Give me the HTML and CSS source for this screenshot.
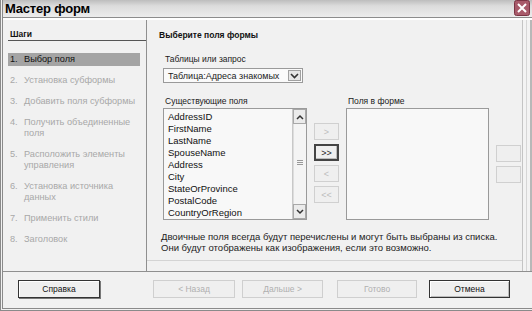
FILE: index.html
```html
<!DOCTYPE html>
<html lang="ru">
<head>
<meta charset="utf-8">
<title>Мастер форм</title>
<link rel="stylesheet" href="styles.css">
</head>
<body>
<div class="win">
  <div class="titlebar">
    <span class="title">Мастер форм</span>
    <span class="close"><svg width="16" height="16" viewBox="0 0 16 16"><rect x="0.5" y="0.5" width="15" height="15" rx="2" fill="#a85a6a" stroke="#7a3444"/><path d="M4 4 L12 12 M12 4 L4 12" stroke="#fff" stroke-width="2"/></svg></span>
  </div>
  <div class="body">
    <aside class="steps">
      <div class="steps-head">Шаги</div>
      <ol class="step-list">
        <li class="step active"><span class="num">1.</span><span>Выбор поля</span></li>
        <li class="step"><span class="num">2.</span><span>Установка субформы</span></li>
        <li class="step"><span class="num">3.</span><span>Добавить поля субформы</span></li>
        <li class="step"><span class="num">4.</span><span>Получить объединенные поля</span></li>
        <li class="step"><span class="num">5.</span><span>Расположить элементы управления</span></li>
        <li class="step"><span class="num">6.</span><span>Установка источника данных</span></li>
        <li class="step"><span class="num">7.</span><span>Применить стили</span></li>
        <li class="step"><span class="num">8.</span><span>Заголовок</span></li>
      </ol>
    </aside>
    <main class="page">
      <div class="page-head">Выберите поля формы</div>
      <div class="content">
        <div class="label">Таблицы или запрос</div>
        <div class="combo">
          <span class="combo-text">Таблица:Адреса знакомых</span>
          <span class="combo-btn"><svg width="9" height="6" viewBox="0 0 9 6"><path d="M1 1 L4.5 4.5 L8 1" fill="none" stroke="#333" stroke-width="1.6"/></svg></span>
        </div>
        <div class="lists">
          <div class="label u">Существующие поля</div>
          <div></div>
          <div class="label u">Поля в форме</div>
          <div></div>
          <div class="listbox">
            <ul class="items">
              <li>AddressID</li>
              <li>FirstName</li>
              <li>LastName</li>
              <li>SpouseName</li>
              <li>Address</li>
              <li>City</li>
              <li>StateOrProvince</li>
              <li>PostalCode</li>
              <li>CountryOrRegion</li>
            </ul>
            <div class="scroll">
              <span class="sbtn"><svg width="8" height="6" viewBox="0 0 8 6"><path d="M1 5 L4 2 L7 5" fill="none" stroke="#333" stroke-width="1.5"/></svg></span>
              <span class="track"><span class="grip"></span></span>
              <span class="sbtn"><svg width="8" height="6" viewBox="0 0 8 6"><path d="M1 1 L4 4 L7 1" fill="none" stroke="#333" stroke-width="1.5"/></svg></span>
            </div>
          </div>
          <div class="movers">
            <span class="mbtn off">&gt;</span>
            <span class="mbtn on">&gt;&gt;</span>
            <span class="mbtn off">&lt;</span>
            <span class="mbtn off">&lt;&lt;</span>
          </div>
          <div class="listbox empty"></div>
          <div class="movers side">
            <span class="mbtn off"></span>
            <span class="mbtn off"></span>
          </div>
        </div>
        <p class="note">Двоичные поля всегда будут перечислены и могут быть выбраны из списка.<br>Они будут отображены как изображения, если это возможно.</p>
      </div>
    </main>
    <div class="edge"></div>
  </div>
  <div class="footer">
    <span class="btn on shadow">Справка</span>
    <span class="btn off back">&lt; Назад</span>
    <span class="btn off next">Дальше &gt;</span>
    <span class="btn off finish">Готово</span>
    <span class="btn on cancel">Отмена</span>
  </div>
</div>
</body>
</html>
```
FILE: styles.css
```css
* { box-sizing: border-box; }
html, body { margin: 0; padding: 0; }
body {
  width: 532px;
  height: 311px;
  overflow: hidden;
  background: #efefef;
  font-family: "Liberation Sans", Arial, sans-serif;
  font-size: 8.5px;
  color: #1a1a1a;
}
.win {
  width: 532px;
  height: 311px;
  display: flex;
  flex-direction: column;
  border-left: 3px double #8a8a8a;
  border-bottom: 3px double #8a8a8a;
  background: #f1f1f1;
}
.titlebar {
  height: 18px;
  display: flex;
  align-items: center;
  justify-content: space-between;
  padding-left: 2px;
  background: linear-gradient(#bdbdbd, #dcdcdc 35%, #ececec);
  border-bottom: 1px solid #8c8c8c;
  box-shadow: 0 2px 0 #ffffff;
}
.title {
  font-size: 13px;
  font-weight: bold;
  color: #000;
  letter-spacing: -0.2px;
}
.close { display: flex; margin-right: 2px; align-self: flex-start; }
.body {
  flex: 1;
  display: flex;
  margin-top: 2px;
  border-bottom: 1px solid #8f8f8f;
}
.steps {
  width: 144px;
  border-right: 1px solid #8f8f8f;
  padding: 0 6px 0 5px;
}
.steps-head {
  font-weight: bold;
  padding: 9px 0 0 2px;
  line-height: 11px;
  height: 21px;
  border-bottom: 1px solid #555;
  margin-right: -6px;
  color: #111;
}
.step-list {
  list-style: none;
  margin: 12px 0 0;
  padding: 0;
}
.step {
  display: flex;
  font-size: 9.2px;
  line-height: 11px;
  padding: 1px 0 1px 2px;
  margin-bottom: 8px;
  color: #a8a8a8;
}
.step .num { width: 14px; flex: none; }
.step.active { background: #a4a4a4; color: #111; }
.page {
  flex: 1;
  display: flex;
  flex-direction: column;
  border-bottom: 1px solid #d4d4d4;
  margin-bottom: 10px;
}
.page-head {
  font-weight: bold;
  line-height: 11px;
  padding: 10px 0 0 12px;
  height: 22px;
  color: #111;
}
.content { padding: 12px 0 0 16px; }
.label { line-height: 11px; height: 12px; padding-left: 2px; }
.label.u { padding-left: 2px; }
.combo {
  margin-top: 2px;
  width: 140px;
  height: 15px;
  border: 1px solid #9a9a9a;
  background: #fafafa;
  display: flex;
  align-items: center;
  justify-content: space-between;
  padding-left: 4px;
  font-size: 9px;
}
.combo-btn {
  width: 13px;
  height: 11px;
  margin-right: 1px;
  border: 1px solid #a0a0a0;
  background: #e6e6e6;
  display: flex;
  align-items: center;
  justify-content: center;
}
.lists {
  margin-top: 13px;
  display: grid;
  grid-template-columns: 144px 25px 143px 25px;
  grid-template-rows: 12px 112px;
  column-gap: 7px;
}
.listbox {
  border: 1px solid #9a9a9a;
  background: #f8f8f8;
  display: flex;
}
.items {
  list-style: none;
  margin: 0;
  padding: 2px 0 0 4px;
  flex: 1;
  font-size: 9.5px;
}
.items li { line-height: 12px; height: 12px; color: #111; }
.scroll {
  width: 14px;
  display: flex;
  flex-direction: column;
  border-left: 1px solid #c8c8c8;
}
.sbtn {
  height: 15px;
  border: 1px solid #a8a8a8;
  background: #ebebeb;
  display: flex;
  align-items: center;
  justify-content: center;
}
.track { flex: 1; position: relative; background: #f4f4f4; border-left: 1px solid #ddd; }
.grip {
  position: absolute;
  left: 3px; right: 3px; top: 36px;
  height: 5px;
  border-top: 1px solid #999;
  border-bottom: 1px solid #999;
}
.grip::after { content: ""; position: absolute; left: 0; right: 0; top: 1px; border-top: 1px solid #999; }
.movers {
  display: flex;
  flex-direction: column;
  gap: 4px;
  padding-top: 15px;
}
.movers.side { padding-top: 37px; }
.mbtn {
  height: 17px;
  border: 1px solid #d0d0d0;
  background: #efefef;
  display: flex;
  align-items: center;
  justify-content: center;
  color: #bdbdbd;
  font-size: 9px;
}
.mbtn.on { border: 2px solid #444; color: #222; box-shadow: inset -1px -1px 0 #bbb; }
.note {
  margin: 11px 0 0 -2px;
  line-height: 11px;
  font-size: 9.5px;
  color: #222;
  white-space: nowrap;
}
.edge {
  width: 10px;
  border-left: 1px solid #c4c4c4;
  border-right: 2px solid #b8b8b8;
  background: linear-gradient(90deg, #f3f3f3 0 3px, #d6d6d6 3px 4px, #f3f3f3 4px);
}
.footer {
  height: 36px;
  display: flex;
  align-items: flex-start;
  padding: 8px 0 0 15px;
}
.btn {
  width: 82px;
  height: 18px;
  display: flex;
  align-items: center;
  justify-content: center;
  background: #efefef;
  border: 1px solid #cfcfcf;
  color: #b0b0b0;
}
.btn.on { border: 1px solid #333; color: #111; box-shadow: inset 1px 1px 0 #fff, inset -1px -1px 0 #bbb; }
.btn.shadow { box-shadow: inset 1px 1px 0 #fff, 1px 1px 0 #777; }
.back { margin-left: 53px; }
.next { margin-left: 7px; width: 81px; }
.finish { margin-left: 14px; width: 80px; }
.cancel { margin-left: 12px; width: 81px; }
```
